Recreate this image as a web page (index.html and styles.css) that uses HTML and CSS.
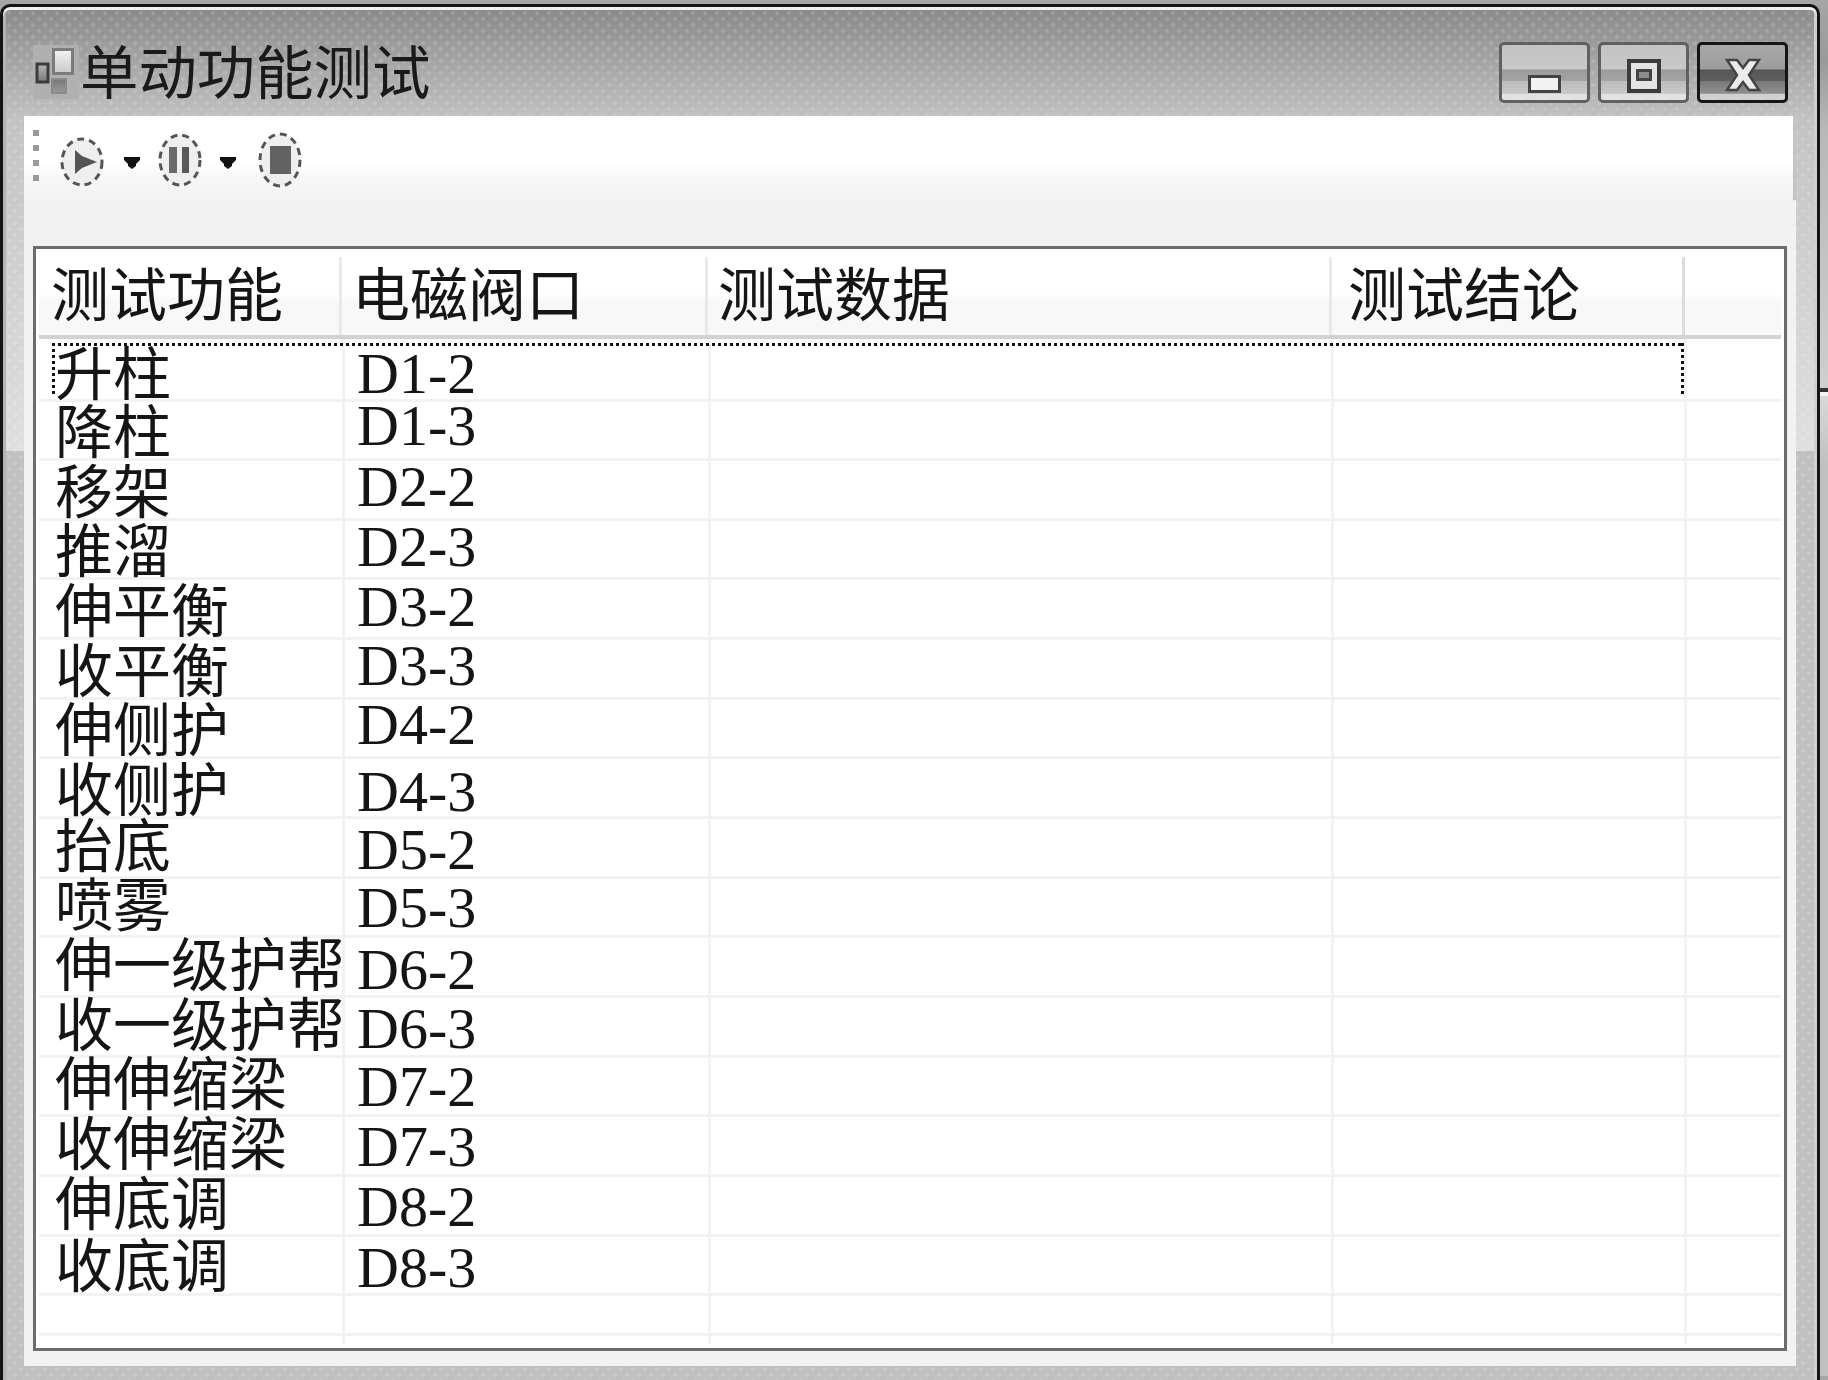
FILE: index.html
```html
<!DOCTYPE html>
<html lang="zh-CN">
<head>
<meta charset="utf-8">
<title>单动功能测试</title>
<link rel="stylesheet" href="styles.css">
</head>
<body>
<div class="screen">
  <div class="window">
    <header class="titlebar">
      <svg class="app-icon" width="46" height="54" viewBox="0 0 46 54">
        <defs>
          <linearGradient id="ig1" x1="0" y1="0" x2="0" y2="1"><stop offset="0" stop-color="#f4f4f4"/><stop offset="1" stop-color="#c8c8c8"/></linearGradient>
          <linearGradient id="ig2" x1="0" y1="0" x2="0" y2="1"><stop offset="0" stop-color="#777"/><stop offset="1" stop-color="#999"/></linearGradient>
          <linearGradient id="ig3" x1="0" y1="0" x2="0" y2="1"><stop offset="0" stop-color="#b8b8b8"/><stop offset="1" stop-color="#777"/></linearGradient>
        </defs>
        <rect width="46" height="54" fill="#b0b0b0"/>
        <rect x="20.5" y="4.5" width="19" height="24" fill="url(#ig1)" stroke="#7c7c7c" stroke-width="3"/>
        <rect x="4" y="19" width="11" height="18" fill="url(#ig3)" stroke="#3c3c3c" stroke-width="3"/>
        <rect x="19" y="34" width="14" height="14" fill="url(#ig2)" stroke="#8a8a8a" stroke-width="2"/>
      </svg>
      <h1 class="title">单动功能测试</h1>
      <div class="caption">
        <button class="cap-btn" type="button" aria-label="最小化">
          <svg width="34" height="20" viewBox="0 0 34 20" class="cap-min"><rect x="1.5" y="1.5" width="30" height="15" fill="#f2f2f2" stroke="#444" stroke-width="3"/></svg>
        </button>
        <button class="cap-btn" type="button" aria-label="最大化">
          <svg width="34" height="34" viewBox="0 0 34 34" class="cap-max"><rect x="2" y="2" width="30" height="30" fill="#e4e4e4" stroke="#3c3c3c" stroke-width="4"/><rect x="10.5" y="11.5" width="13" height="9" fill="#8c8c8c" stroke="#444" stroke-width="3"/></svg>
        </button>
        <button class="cap-btn cap-close" type="button" aria-label="关闭">
          <svg width="36" height="34" viewBox="0 0 36 34"><path d="M2 2H12L18 10L24 2H34L24 17L34 32H24L18 24L12 32H2L12 17Z" fill="#ececec" stroke="#444" stroke-width="2.5"/></svg>
        </button>
      </div>
    </header>
    <main class="client">
      <div class="toolbar">
        <svg class="grip" width="6" height="51" viewBox="0 0 6 51"><g fill="#999"><rect width="6" height="6"/><rect y="15" width="6" height="6"/><rect y="30" width="6" height="6"/><rect y="45" width="6" height="6"/></g></svg>
        <svg class="tool tool-play" width="44" height="52" viewBox="0 0 44 52"><ellipse cx="22" cy="26" rx="20" ry="23" fill="#efefef" stroke="#555" stroke-width="3" stroke-dasharray="7 5"/><path d="M15 14V38L22 32L37 26L22 20Z" fill="#555"/></svg>
        <svg class="arrow arrow-one" width="16" height="12" viewBox="0 0 16 12"><path d="M0 0H16V3L12 7V9L8 12L4 9V7L0 3Z" fill="#111"/></svg>
        <svg class="tool tool-pause" width="44" height="56" viewBox="0 0 44 56"><ellipse cx="22" cy="28" rx="20" ry="25" fill="#efefef" stroke="#555" stroke-width="3" stroke-dasharray="7 5"/><rect x="11" y="15" width="8" height="26" fill="#6a6a6a"/><rect x="24" y="15" width="7" height="26" fill="#5a5a5a"/></svg>
        <svg class="arrow arrow-two" width="16" height="12" viewBox="0 0 16 12"><path d="M0 0H16V3L12 7V9L8 12L4 9V7L0 3Z" fill="#111"/></svg>
        <svg class="tool tool-stop" width="44" height="58" viewBox="0 0 44 58"><ellipse cx="22" cy="29" rx="20" ry="26" fill="#efefef" stroke="#555" stroke-width="3" stroke-dasharray="7 5"/><rect x="12" y="15" width="21" height="28" fill="#626262"/></svg>
      </div>
      <section class="grid">
        <div class="head">
          <div class="hcell h1">测试功能</div>
          <div class="hcell h2">电磁阀口</div>
          <div class="hcell h3">测试数据</div>
          <div class="hcell h4">测试结论</div>
          <div class="hcell h5"></div>
        </div>
        <div class="row row-first"><div class="focus"></div><div class="cell fn f0">升柱</div><div class="cell port p5">D1-2</div><div class="cell"></div><div class="cell"></div><div class="cell last"></div></div>
        <div class="row"><div class="cell fn">降柱</div><div class="cell port p12">D1-3</div><div class="cell"></div><div class="cell"></div><div class="cell last"></div></div>
        <div class="row"><div class="cell fn">移架</div><div class="cell port p11">D2-2</div><div class="cell"></div><div class="cell"></div><div class="cell last"></div></div>
        <div class="row"><div class="cell fn">推溜</div><div class="cell port p10">D2-3</div><div class="cell"></div><div class="cell"></div><div class="cell last"></div></div>
        <div class="row"><div class="cell fn">伸平衡</div><div class="cell port p10">D3-2</div><div class="cell"></div><div class="cell"></div><div class="cell last"></div></div>
        <div class="row"><div class="cell fn">收平衡</div><div class="cell port p11">D3-3</div><div class="cell"></div><div class="cell"></div><div class="cell last"></div></div>
        <div class="row"><div class="cell fn">伸侧护</div><div class="cell port p11">D4-2</div><div class="cell"></div><div class="cell"></div><div class="cell last"></div></div>
        <div class="row"><div class="cell fn">收侧护</div><div class="cell port p4">D4-3</div><div class="cell"></div><div class="cell"></div><div class="cell last"></div></div>
        <div class="row"><div class="cell fn f4">抬底</div><div class="cell port p6">D5-2</div><div class="cell"></div><div class="cell"></div><div class="cell last"></div></div>
        <div class="row"><div class="cell fn f4">喷雾</div><div class="cell port p7">D5-3</div><div class="cell"></div><div class="cell"></div><div class="cell last"></div></div>
        <div class="row"><div class="cell fn f4">伸一级护帮</div><div class="cell port p5">D6-2</div><div class="cell"></div><div class="cell"></div><div class="cell last"></div></div>
        <div class="row"><div class="cell fn f4">收一级护帮</div><div class="cell port p6">D6-3</div><div class="cell"></div><div class="cell"></div><div class="cell last"></div></div>
        <div class="row"><div class="cell fn f4">伸伸缩梁</div><div class="cell port p7">D7-2</div><div class="cell"></div><div class="cell"></div><div class="cell last"></div></div>
        <div class="row"><div class="cell fn f4">收伸缩梁</div><div class="cell port p7">D7-3</div><div class="cell"></div><div class="cell"></div><div class="cell last"></div></div>
        <div class="row"><div class="cell fn f4">伸底调</div><div class="cell port p7">D8-2</div><div class="cell"></div><div class="cell"></div><div class="cell last"></div></div>
        <div class="row"><div class="cell fn f2">收底调</div><div class="cell port p5">D8-3</div><div class="cell"></div><div class="cell"></div><div class="cell last"></div></div>
        <div class="row row-new"><div class="cell"></div><div class="cell"></div><div class="cell"></div><div class="cell"></div><div class="cell last"></div></div>
        <div class="row row-stub"><div class="cell"></div><div class="cell"></div><div class="cell"></div><div class="cell"></div><div class="cell last"></div></div>
      </section>
    </main>
  </div>
  <aside class="sliver">
    <div class="sliver-top"></div>
    <div class="sliver-bottom"></div>
  </aside>
</div>
</body>
</html>
```

FILE: styles.css
```css
* { box-sizing: border-box; }
html, body { margin: 0; height: 1380px; overflow: hidden; }
body {
  background: #a6a6a6;
  color: #151515;
  font-family: "Liberation Serif", "Noto Sans CJK SC", serif;
}
.screen { display: flex; height: 1380px; padding-top: 4px; width: 1828px; }

.window {
  width: 1820px;
  height: 1376px;
  border: 3px solid #141414;
  border-bottom: 0;
  border-radius: 10px 10px 0 0;
  box-shadow: inset 0 3px 0 #f1f1f1, inset 3px 0 0 #b4b4b4, inset -3px 0 0 #d0d0d0;
  background-color: #c0c0c0;
  background-image:
    radial-gradient(circle, rgba(255,255,255,.14) 1.6px, transparent 2px),
    radial-gradient(circle, rgba(255,255,255,.14) 1.6px, transparent 2px),
    linear-gradient(180deg, #8a8a8a 0, #c0c0c0 108px, #c4c4c4 120px, #dfdfdf 444px, #c0c0c0 444px, #c0c0c0 100%);
  background-size: 12px 12px, 12px 12px, 100% 100%;
  background-position: 0 0, 6px 6px, 0 0;
  padding: 0 21px 0 21px;
  display: flex;
  flex-direction: column;
}

.titlebar {
  height: 109px;
  margin: 0 -21px;
  padding: 0 29px 0 30px;
  display: flex;
  align-items: flex-start;
  flex: none;
}
.app-icon { flex: none; margin: 38px 1px 0 0; }
.title {
  margin: 29px 0 0;
  font: 400 58.4px/66px "Noto Sans CJK SC", sans-serif;
  color: #1a1a1a;
  white-space: nowrap;
}
.caption { margin: 35px 0 0 auto; display: flex; gap: 8px; }
.cap-btn {
  width: 91px;
  height: 61px;
  padding: 0;
  border: 3px solid #606060;
  border-radius: 5px;
  background: linear-gradient(180deg, #c3c3c3 0, #c8c8c8 44%, #9c9c9c 45%, #a4a4a4 65%, #bcbcbc 66%, #c8c8c8 88%, #e2e2e2 89%, #e2e2e2 100%);
  display: flex;
  align-items: center;
  justify-content: center;
}
.cap-min { margin-top: 24px; }
.cap-max { margin-top: 6px; }
.cap-close {
  border-color: #161616;
  background: linear-gradient(180deg, #a8a8a8 0, #9c9c9c 44%, #565656 45%, #5e5e5e 65%, #787878 66%, #909090 88%, #d0d0d0 89%, #d0d0d0 100%);
}
.cap-close svg { margin-top: 4px; }

.client {
  flex: 1;
  background: #f2f2f2;
  display: flex;
  flex-direction: column;
  height: 1246px;
  margin-bottom: 14px;
}

.toolbar {
  height: 84px;
  flex: none;
  margin-bottom: 46px;
  display: flex;
  align-items: flex-start;
  padding: 0 0 0 9px;
  border-right: 3px solid #c4c4c4;
  background-color: #fff;
  background-image: linear-gradient(180deg, #fff 0, #fff 58%, #f7f7f7 72%, #f2f2f2 100%);
}
.grip { flex: none; margin: 14px 21px 0 0; }
.tool, .arrow { flex: none; }
.tool { filter: blur(0.7px); }
.tool-play { margin-top: 20px; }
.arrow-one { margin: 41px 0 0 20px; }
.tool-pause { margin: 16px 0 0 18px; }
.arrow-two { margin: 41px 0 0 18px; }
.tool-stop { margin: 15px 0 0 22px; }

.grid {
  margin-left: 9px;
  width: 1754px;
  height: 1105px;
  border: 3px solid #6c6c6c;
  background: #fff;
  padding: 0 3px;
  flex: none;
}

.head {
  height: 90px;
  display: grid;
  grid-template-columns: 303px 366px 624px 353px 96px;
  border-bottom: 4px solid #d2d2d2;
  padding-top: 8px;
  background-image: linear-gradient(180deg, #fff 0, #fff 52%, #f8f8f8 60%, #f8f8f8 100%);
}
.hcell {
  border-right: 3px solid #e9e9e9;
  font: 400 58px/68px "Noto Sans CJK SC", sans-serif;
  color: #151515;
  white-space: nowrap;
}
.h1 { padding-left: 12px; }
.h2 { padding-left: 10px; }
.h3 { padding-left: 10px; }
.h4 { padding-left: 16px; border-right-color: #dcdcdc; }
.h5 { border-right: 0; }

.row {
  position: relative;
  display: grid;
  grid-template-columns: 306px 366px 623px 353px 94px;
  height: 59.67px;
  border-bottom: 3px solid #f2f2f2;
}
.row-first { height: 62.5px; }
.row-new { height: 40px; }
.row-stub { height: 8px; border-bottom: 0; }

.cell {
  display: flex;
  align-items: flex-end;
  border-right: 3px solid #f2f2f2;
  min-width: 0;
  white-space: nowrap;
}
.cell.last { border-right: 0; }

.fn {
  font: 400 58px/44px "Noto Sans CJK SC", sans-serif;
  padding-left: 16px;
  padding-bottom: 8px;
}
.f0 { padding-bottom: 7px; }
.f2 { padding-bottom: 9px; }
.f4 { padding-bottom: 12px; }

.port {
  font: 400 58px/40px "Liberation Serif", serif;
  padding-left: 12px;
}
.p4 { padding-bottom: 4px; }
.p5 { padding-bottom: 5px; }
.p6 { padding-bottom: 6px; }
.p7 { padding-bottom: 7px; }
.p10 { padding-bottom: 10px; }
.p11 { padding-bottom: 11px; }
.p12 { padding-bottom: 12px; }

.focus {
  position: absolute;
  left: 13px;
  top: 4px;
  width: 1632px;
  height: 52px;
  background:
    repeating-linear-gradient(90deg, #111 0 3px, transparent 3px 6px) left top / 100% 3px no-repeat,
    repeating-linear-gradient(180deg, #111 0 3px, transparent 3px 6px) left top / 3px 100% no-repeat,
    repeating-linear-gradient(180deg, #111 0 3px, transparent 3px 6px) right top / 3px 100% no-repeat;
  z-index: 2;
}

.sliver { width: 8px; display: flex; flex-direction: column; height: 1376px; margin-top: -4px; }
.sliver-top { height: 392px; background: linear-gradient(180deg, #a6a6a6 0, #9a9a9a 60px, #b8b8b8 130px, #cfcfcf 392px); border-bottom: 4px solid #333; flex: none; }
.sliver-bottom { flex: 1; border-top: 4px solid #f4f4f4; background: linear-gradient(180deg, #d8d8d8 0, #c0c0c0 70px, #c0c0c0 100%); }
```
